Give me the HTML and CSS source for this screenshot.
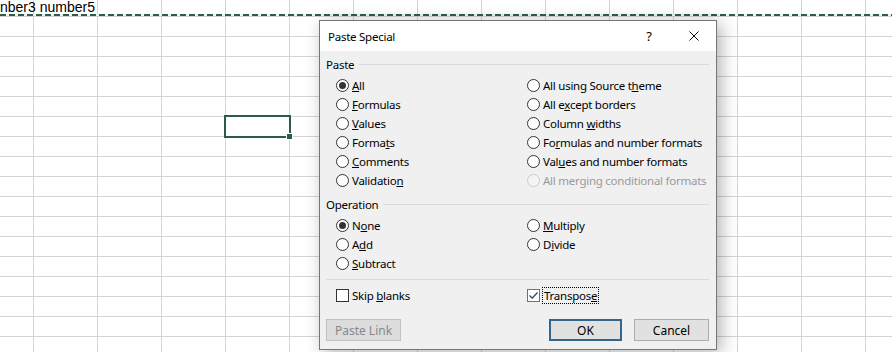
FILE: index.html
```html
<!DOCTYPE html>
<html lang="en">
<head>
    <meta charset="UTF-8">
    <meta name="viewport" content="width=device-width, initial-scale=1.0">
    <title>Paste Special</title>
    <link rel="stylesheet" href="styles.css">
</head>
<body>
    <div class="sheet">
        <div class="sheet-row">
            <div class="cell first">nber3</div>
            <div class="cell">number5</div>
        </div>
        <div class="marquee"></div>
        <div class="selection"><span class="fill-handle"></span></div>
    </div>

    <div class="dialog">
        <div class="title-bar">
            <span class="title">Paste Special</span>
            <span class="help">?</span>
            <span class="close">
                <svg width="10" height="10" viewBox="0 0 10 10">
                    <path d="M0.5 0.5 L9.5 9.5 M9.5 0.5 L0.5 9.5" stroke="#111" stroke-width="1" fill="none"/>
                </svg>
            </span>
        </div>

        <div class="dialog-body">
            <div class="group-header"><span>Paste</span><div class="rule"></div></div>
            <div class="options">
                <label class="option"><span class="radio checked"></span><span><u>A</u>ll</span></label>
                <label class="option"><span class="radio"></span><span>All using Source t<u>h</u>eme</span></label>
                <label class="option"><span class="radio"></span><span><u>F</u>ormulas</span></label>
                <label class="option"><span class="radio"></span><span>All e<u>x</u>cept borders</span></label>
                <label class="option"><span class="radio"></span><span><u>V</u>alues</span></label>
                <label class="option"><span class="radio"></span><span>Column <u>w</u>idths</span></label>
                <label class="option"><span class="radio"></span><span>Forma<u>t</u>s</span></label>
                <label class="option"><span class="radio"></span><span>Fo<u>r</u>mulas and number formats</span></label>
                <label class="option"><span class="radio"></span><span><u>C</u>omments</span></label>
                <label class="option"><span class="radio"></span><span>Val<u>u</u>es and number formats</span></label>
                <label class="option"><span class="radio"></span><span>Validatio<u>n</u></span></label>
                <label class="option disabled"><span class="radio"></span><span>All merging conditional formats</span></label>
            </div>

            <div class="group-header second"><span>Operation</span><div class="rule"></div></div>
            <div class="options">
                <label class="option"><span class="radio checked"></span><span>N<u>o</u>ne</span></label>
                <label class="option"><span class="radio"></span><span><u>M</u>ultiply</span></label>
                <label class="option"><span class="radio"></span><span>A<u>d</u>d</span></label>
                <label class="option"><span class="radio"></span><span>D<u>i</u>vide</span></label>
                <label class="option"><span class="radio"></span><span><u>S</u>ubtract</span></label>
            </div>

            <div class="separator"></div>

            <div class="options checks">
                <label class="option"><span class="checkbox"></span><span>Skip <u>b</u>lanks</span></label>
                <label class="option">
                    <span class="checkbox on">
                        <svg width="11" height="11" viewBox="0 0 11 11">
                            <path d="M1.5 5.5 L4.2 8.2 L9.5 2.5" stroke="#1d3f5c" stroke-width="1.2" fill="none"/>
                        </svg>
                    </span>
                    <span class="focus">Transpos<u>e</u></span>
                </label>
            </div>

            <div class="buttons">
                <button class="btn" disabled>Paste Link</button>
                <div class="btn-group">
                    <button class="btn default">OK</button>
                    <button class="btn">Cancel</button>
                </div>
            </div>
        </div>
    </div>
</body>
</html>
```

FILE: styles.css
```css
:root {
    --grid-color: #d4d4d4;
    --excel-green: #2f5c4b;
    --dialog-bg: #f0f0f0;
    --text-color: #000000;
}

body {
    margin: 0;
    width: 892px;
    height: 352px;
    overflow: hidden;
    background-color: #ffffff;
}

.sheet {
    position: relative;
    height: 352px;
    background-image:
        linear-gradient(to right, var(--grid-color) 1px, transparent 1px),
        linear-gradient(to bottom, var(--grid-color) 1px, transparent 1px);
    background-size: 64px 100%, 100% 20px;
    background-position: 33px 0, 0 16px;
    font-family: 'Liberation Sans', Arial, sans-serif;
}

.sheet-row {
    display: flex;
    height: 14px;
}

.cell {
    width: 64px;
    flex-shrink: 0;
    padding-right: 2px;
    box-sizing: border-box;
    text-align: right;
    white-space: nowrap;
    font-size: 14px;
    line-height: 14px;
    color: #000;
}

.cell.first {
    width: 33px;
}

.marquee {
    height: 2px;
    background-image: repeating-linear-gradient(to right, var(--excel-green) 0 6px, #e8f6f2 6px 9px);
}

.selection {
    position: absolute;
    left: 224px;
    top: 115px;
    width: 67px;
    height: 23px;
    border: 2px solid #2a5c48;
    box-sizing: border-box;
}

.fill-handle {
    position: absolute;
    right: -4px;
    bottom: -4px;
    width: 5px;
    height: 5px;
    background-color: #2a5c48;
    border: 1px solid #ffffff;
}

/* dialog */

.dialog {
    position: absolute;
    left: 319px;
    top: 20px;
    width: 398px;
    height: 330px;
    box-sizing: border-box;
    border: 1px solid #777777;
    background-color: var(--dialog-bg);
    box-shadow: 4px 3px 16px rgba(0, 0, 0, 0.3);
    font-family: 'Noto Sans', 'Open Sans', sans-serif;
    font-size: 11.5px;
    letter-spacing: -0.25px;
    color: var(--text-color);
}

.title-bar {
    display: flex;
    align-items: center;
    height: 30px;
    padding-left: 8px;
    background-color: #ffffff;
}

.title {
    flex: 1;
    font-size: 11.5px;
}

.help {
    width: 30px;
    margin-right: 8px;
    text-align: center;
    font-size: 13px;
}

.close {
    width: 44px;
    display: flex;
    justify-content: center;
    align-items: center;
}

.dialog-body {
    padding: 5px 7px 0 6px;
}

.group-header {
    display: flex;
    align-items: center;
    height: 16px;
}

.group-header.second {
    margin-top: 6px;
}

.rule {
    flex: 1;
    height: 1px;
    margin-left: 5px;
    background-color: #dadada;
}

.options {
    display: grid;
    grid-template-columns: 191px 1fr;
    grid-auto-rows: 19px;
    margin-top: 4px;
    padding-left: 10px;
}

.option {
    display: flex;
    align-items: center;
    white-space: nowrap;
}

.radio {
    width: 13px;
    height: 13px;
    box-sizing: border-box;
    margin-right: 3px;
    border: 1px solid #333333;
    border-radius: 50%;
    background-color: #ffffff;
    display: flex;
    justify-content: center;
    align-items: center;
}

.radio.checked::after {
    content: '';
    width: 7px;
    height: 7px;
    border-radius: 50%;
    background-color: #333333;
}

.option.disabled {
    color: #9a9a9a;
}

.option.disabled .radio {
    border-color: #cccccc;
    background-color: #f4f4f4;
}

.separator {
    height: 1px;
    margin-top: 6px;
    background-color: #dadada;
}

.options.checks {
    margin-top: 6px;
}

.checkbox {
    width: 13px;
    height: 13px;
    box-sizing: border-box;
    margin-right: 3px;
    border: 1px solid #333333;
    background-color: #ffffff;
    display: flex;
    justify-content: center;
    align-items: center;
}

.checkbox.on {
    border-color: #3c7fb1;
    margin-right: 2px;
}

.focus {
    border: 1px dotted #000000;
    padding: 0 1px;
    line-height: 15px;
}

.buttons {
    display: flex;
    justify-content: space-between;
    margin-top: 14px;
}

.btn-group {
    display: flex;
    gap: 12px;
}

.btn {
    width: 75px;
    height: 22px;
    padding: 0;
    box-sizing: border-box;
    border: 1px solid #adadad;
    background-color: #e1e1e1;
    font-family: 'Noto Sans', 'Open Sans', sans-serif;
    font-size: 12px;
    color: var(--text-color);
}

.btn:disabled {
    background-color: #dcdcdc;
    border-color: #c2c2c2;
    color: #888888;
}

.btn.default {
    width: 73px;
    border: 2px solid #33668a;
}
```
